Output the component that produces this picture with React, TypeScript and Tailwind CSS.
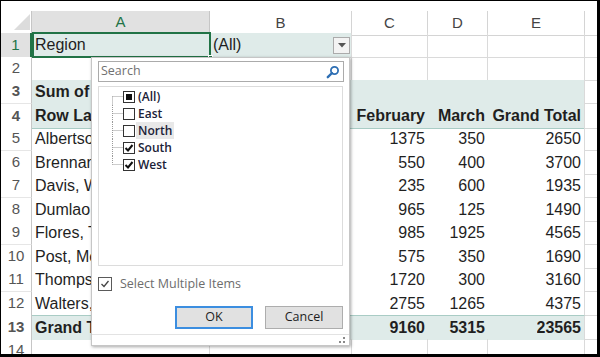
import React from 'react';

const GRID = 'grid grid-cols-[31px_178px_142px_76px_60px_97px_1fr]';

type Person = [string, number, number, number, number];

const people: Person[] = [
  ['Albertson, Kathy', 925, 1375, 350, 2650],
  ['Brennan, Michael', 2750, 550, 400, 3700],
  ['Davis, William', 1100, 235, 600, 1935],
  ['Dumlao, Richard', 400, 965, 125, 1490],
  ['Flores, Tia', 1655, 985, 1925, 4565],
  ['Post, Melissa', 765, 575, 350, 1690],
  ['Thompson, Shannon', 1140, 1720, 300, 3160],
  ['Walters, Chris', 355, 2755, 1265, 4375],
];

function RowNum({ n, active }: { n: number; active?: boolean }) {
  return (
    <div
      className={
        active
          ? 'flex items-center justify-center bg-[#e1e1e1] text-[#217346] text-[15px] border-r-2 border-r-[#217346] border-b border-b-[#d4d4d4]'
          : 'flex items-center justify-center bg-white text-[#555] text-[15px] border-r border-r-[#c6c6c6] border-b border-b-[#e6e6e6]'
      }
    >
      {n}
    </div>
  );
}

function Grid({ children }: { children?: React.ReactNode }) {
  return <div className="border-r border-b border-[#dadada] overflow-hidden whitespace-nowrap">{children}</div>;
}

function Num({ v, bold }: { v: number | string; bold?: boolean }) {
  return (
    <div className={`flex items-center justify-end pr-[3px] overflow-hidden whitespace-nowrap ${bold ? 'font-bold' : ''}`}>
      {v}
    </div>
  );
}

function Check() {
  return (
    <svg width="10" height="10" viewBox="0 0 10 10">
      <path d="M1.5 5 L4 7.5 L8.5 2" fill="none" stroke="#111" strokeWidth="2" />
    </svg>
  );
}

function TreeLine({ first, last }: { first?: boolean; last?: boolean }) {
  return (
    <svg width="11" height="17" viewBox="0 0 11 17" className="shrink-0">
      <line x1="0.5" y1={first ? 8.5 : 0} x2="0.5" y2={last ? 8.5 : 17} stroke="#9a9a9a" strokeDasharray="1 1" />
      <line x1="0.5" y1="8.5" x2="11" y2="8.5" stroke="#9a9a9a" strokeDasharray="1 1" />
    </svg>
  );
}

const items = [
  { label: '(All)', state: 'mixed' },
  { label: 'East', state: 'off' },
  { label: 'North', state: 'off', hover: true },
  { label: 'South', state: 'on' },
  { label: 'West', state: 'on' },
];

function FilterPanel() {
  return (
    <div className="absolute left-[90px] top-[56px] w-[259px] h-[289px] bg-white border border-[#c6c6c6] shadow-[1px_1px_3px_rgba(0,0,0,0.35)] flex flex-col pl-[6px] pt-[3px] font-['Open_Sans',sans-serif]">
      <div className="w-[246px] h-[21px] border border-[#ababab] flex items-center justify-between pl-[2px] pr-[3px]">
        <span className="text-[12.5px] text-[#707070]">Search</span>
        <svg width="14" height="14" viewBox="0 0 14 14">
          <circle cx="8.5" cy="5.5" r="3.6" fill="none" stroke="#2e6fb4" strokeWidth="1.8" />
          <line x1="6" y1="8" x2="1.8" y2="12.2" stroke="#2e6fb4" strokeWidth="2.4" strokeLinecap="round" />
        </svg>
      </div>

      <div className="mt-[4px] w-[245px] h-[180px] border border-[#dcdcdc] pt-px pl-[13px]">
        {items.map((it, i) => (
          <div key={it.label} className="flex items-center h-[17px]">
            <TreeLine first={i === 0} last={i === items.length - 1} />
            <div className="w-[12px] h-[12px] border border-[#333] bg-white flex items-center justify-center shrink-0">
              {it.state === 'mixed' && <div className="w-[6px] h-[6px] bg-[#111]" />}
              {it.state === 'on' && <Check />}
            </div>
            <span
              className={`ml-px h-full flex items-center px-[2px] text-[12px] font-semibold text-[#1b2238] ${it.hover ? 'bg-[#e8e8e8]' : ''}`}
            >
              {it.label}
            </span>
          </div>
        ))}
      </div>

      <div className="mt-[11px] flex items-center h-[14px]">
        <div className="w-[14px] h-[14px] border border-[#5a5a5a] flex items-center justify-center">
          <svg width="10" height="10" viewBox="0 0 10 10">
            <path d="M1.5 5 L4 7.5 L8.5 2" fill="none" stroke="#444" strokeWidth="1.3" />
          </svg>
        </div>
        <span className="ml-[8px] text-[12.5px] text-[#6d6d6d]">Select Multiple Items</span>
      </div>

      <div className="mt-[15px] flex justify-end gap-[12px] w-[245px]">
        <button className="w-[78px] h-[23px] bg-[#e1e1e1] border-2 border-[#3c8ee0] text-[12.5px] text-[#1e1e1e]">OK</button>
        <button className="w-[78px] h-[23px] bg-[#e1e1e1] border border-[#adadad] text-[12.5px] text-[#1e1e1e]">Cancel</button>
      </div>

      <div className="mt-auto -ml-[6px] h-[11px] border-t border-[#e3e3e3] flex justify-end items-center pr-[3px]">
        <svg width="8" height="7" viewBox="0 0 8 7">
          <rect x="5" y="0" width="2" height="2" fill="#8a8a8a" />
          <rect x="1" y="4" width="2" height="2" fill="#8a8a8a" />
          <rect x="5" y="4" width="2" height="2" fill="#8a8a8a" />
        </svg>
      </div>
    </div>
  );
}

export default function App() {
  const teal = 'bg-[#dfebe9]';
  return (
    <div className="relative w-[600px] h-[357px] overflow-hidden bg-white border-black border-t border-l border-r-[3px] border-b-[3px] font-['Liberation_Sans',Arial,sans-serif] text-[16px] text-[#1f1f1f]">
      <div className="pt-[10px]">
        {/* column headers */}
        <div className={`${GRID} h-[22px] text-[15px] text-[#444]`}>
          <div className="border-r border-b border-[#c6c6c6] bg-white">
            <svg width="30" height="21" viewBox="0 0 30 21">
              <polygon points="13,19 29,19 29,3" fill="#dcdcdc" />
            </svg>
          </div>
          <div className="flex items-center justify-center bg-[#e1e1e1] text-[#217346] border-r border-r-[#c6c6c6] border-b-2 border-b-[#217346]">A</div>
          <div className="flex items-center justify-center border-r border-b border-[#d4d4d4]">B</div>
          <div className="flex items-center justify-center border-r border-b border-[#d4d4d4]">C</div>
          <div className="flex items-center justify-center border-r border-b border-[#d4d4d4]">D</div>
          <div className="flex items-center justify-center border-r border-b border-[#d4d4d4]">E</div>
          <div className="border-b border-[#d4d4d4]" />
        </div>

        {/* row 1 */}
        <div className={`${GRID} h-[24px]`}>
          <RowNum n={1} active />
          <div className={`relative ${teal} flex items-center pl-[3px] border-b border-[#dadada]`}>
            Region
            <div className="absolute -top-px left-0 -right-px -bottom-px border-2 border-[#217346]" />
            <div className="absolute -right-[3px] -bottom-[3px] w-[5px] h-[5px] bg-[#217346] border border-white" />
          </div>
          <div className={`${teal} flex items-center justify-between pl-[3px] pr-px border-r border-b border-[#dadada]`}>
            (All)
            <div className="w-[17px] h-[17px] border border-[#ababab] bg-[#f3f3f3] flex items-center justify-center">
              <svg width="8" height="5" viewBox="0 0 8 5">
                <polygon points="0,0 8,0 4,4.5" fill="#555" />
              </svg>
            </div>
          </div>
          <Grid />
          <Grid />
          <Grid />
          <div className="border-b border-[#dadada]" />
        </div>

        {/* row 2 */}
        <div className={`${GRID} h-[23px]`}>
          <RowNum n={2} />
          <Grid />
          <Grid />
          <Grid />
          <Grid />
          <Grid />
          <div className="border-b border-[#dadada]" />
        </div>

        {/* row 3 */}
        <div className={`${GRID} h-[24px] font-bold`}>
          <RowNum n={3} />
          <div className={`${teal} flex items-center pl-[3px] overflow-hidden whitespace-nowrap`}>Sum of Order Amount</div>
          <div className={`${teal} flex items-center pl-[3px] overflow-hidden whitespace-nowrap`}>Column Labels</div>
          <div className={teal} />
          <div className={teal} />
          <div className={`${teal} border-r border-[#dadada]`} />
          <div className="border-b border-[#dadada]" />
        </div>

        {/* row 4 */}
        <div className={`${GRID} h-[23px] font-bold`}>
          <RowNum n={4} />
          <div className={`${teal} flex items-center pl-[3px] border-b border-[#a9ccc5] overflow-hidden whitespace-nowrap`}>Row Labels</div>
          <div className={`${teal} border-b border-[#a9ccc5]`}><Num v="January" bold /></div>
          <div className={`${teal} border-b border-[#a9ccc5]`}><Num v="February" bold /></div>
          <div className={`${teal} border-b border-[#a9ccc5]`}><Num v="March" bold /></div>
          <div className={`${teal} border-b border-[#a9ccc5] border-r border-r-[#dadada]`}><Num v="Grand Total" bold /></div>
          <div className="border-b border-[#dadada]" />
        </div>

        {/* rows 5 - 12 */}
        {people.map((p, i) => (
          <div key={p[0]} className={`${GRID} ${i % 2 === 0 ? 'h-[24px]' : 'h-[23px]'}`}>
            <RowNum n={i + 5} />
            <div className="flex items-center pl-[3px] overflow-hidden whitespace-nowrap">{p[0]}</div>
            <Num v={p[1]} />
            <Num v={p[2]} />
            <Num v={p[3]} />
            <div className="border-r border-[#dadada] flex justify-end"><Num v={p[4]} /></div>
            <div className="border-b border-[#dadada]" />
          </div>
        ))}

        {/* row 13 */}
        <div className={`${GRID} h-[24px] font-bold`}>
          <RowNum n={13} />
          <div className={`${teal} flex items-center pl-[3px] border-t border-[#a9ccc5] overflow-hidden whitespace-nowrap`}>Grand Total</div>
          <div className={`${teal} border-t border-[#a9ccc5] flex justify-end`}><Num v={9090} bold /></div>
          <div className={`${teal} border-t border-[#a9ccc5] flex justify-end`}><Num v={9160} bold /></div>
          <div className={`${teal} border-t border-[#a9ccc5] flex justify-end`}><Num v={5315} bold /></div>
          <div className={`${teal} border-t border-[#a9ccc5] border-r border-r-[#dadada] flex justify-end`}><Num v={23565} bold /></div>
          <div className="border-b border-[#dadada]" />
        </div>

        {/* row 14 */}
        <div className={`${GRID} h-[23px]`}>
          <RowNum n={14} />
          <Grid />
          <Grid />
          <Grid />
          <Grid />
          <Grid />
          <div className="border-b border-[#dadada]" />
        </div>
      </div>

      <FilterPanel />
    </div>
  );
}
